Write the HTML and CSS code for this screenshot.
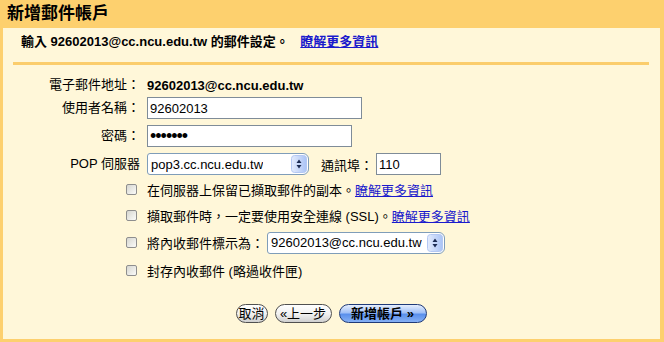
FILE: index.html
```html
<!DOCTYPE html>
<html lang="zh-Hant">
<head>
    <meta charset="UTF-8">
    <title>新增郵件帳戶</title>
    <link rel="stylesheet" href="styles.css">
</head>
<body>
    <div class="window">
        <div class="titlebar">新增郵件帳戶</div>

        <div class="panel">
            <p class="intro"><b>輸入 92602013@cc.ncu.edu.tw 的郵件設定。</b> <a href="#">瞭解更多資訊</a></p>
            <div class="rule"></div>

            <!-- Account fields + options -->
            <div class="form">
                <span class="label">電子郵件地址：</span>
                <span class="value">92602013@cc.ncu.edu.tw</span>

                <label class="label" for="username">使用者名稱：</label>
                <div class="cell"><input type="text" id="username" class="text user" value="92602013"></div>

                <label class="label" for="password">密碼：</label>
                <div class="cell"><input type="password" id="password" class="text pass" value="abcdefg"></div>

                <span class="label">POP 伺服器</span>
                <div class="cell">
                    <span class="select pop">
                        <span class="select-text">pop3.cc.ncu.edu.tw</span>
                        <svg class="spin" width="16" height="18" viewBox="0 0 16 18">
                            <defs>
                                <linearGradient id="spin-a" x1="0" y1="0" x2="1" y2="0">
                                    <stop offset="0" stop-color="#e4ecfd"/>
                                    <stop offset="1" stop-color="#aac3f5"/>
                                </linearGradient>
                            </defs>
                            <rect x="0.5" y="0.5" width="15" height="17" rx="3" fill="url(#spin-a)" stroke="#b4c8f3"/>
                            <path d="M8 4.5 L10.5 8 H5.5 Z M8 13.5 L10.5 10 H5.5 Z" fill="#1c2b52"/>
                        </svg>
                    </span>
                    <label class="port-label" for="port">通訊埠：</label>
                    <input type="text" id="port" class="text port" value="110">
                </div>

                <span class="check"></span>
                <div class="cell opt">在伺服器上保留已擷取郵件的副本。<a href="#">瞭解更多資訊</a></div>

                <span class="check"></span>
                <div class="cell opt">擷取郵件時，一定要使用安全連線 (SSL)。<a href="#">瞭解更多資訊</a></div>

                <span class="check"></span>
                <div class="cell opt">
                    將內收郵件標示為：
                    <span class="select label-as">
                        <span class="select-text">92602013@cc.ncu.edu.tw</span>
                        <svg class="spin" width="16" height="18" viewBox="0 0 16 18">
                            <defs>
                                <linearGradient id="spin-b" x1="0" y1="0" x2="1" y2="0">
                                    <stop offset="0" stop-color="#e4ecfd"/>
                                    <stop offset="1" stop-color="#aac3f5"/>
                                </linearGradient>
                            </defs>
                            <rect x="0.5" y="0.5" width="15" height="17" rx="3" fill="url(#spin-b)" stroke="#b4c8f3"/>
                            <path d="M8 4.5 L10.5 8 H5.5 Z M8 13.5 L10.5 10 H5.5 Z" fill="#1c2b52"/>
                        </svg>
                    </span>
                </div>

                <span class="check"></span>
                <div class="cell opt">封存內收郵件 (略過收件匣)</div>
            </div>

            <div class="actions">
                <button class="btn cancel">取消</button>
                <button class="btn back">«上一步</button>
                <button class="btn primary">新增帳戶 »</button>
            </div>
        </div>
    </div>
</body>
</html>
```

FILE: styles.css
```css
body {
    margin: 0;
    font-family: "Liberation Sans", "Noto Sans CJK TC", sans-serif;
    font-size: 13px;
    color: #000;
    background: #fff;
}
.window {
    width: 664px;
    height: 342px;
    display: flex;
    flex-direction: column;
}
.titlebar {
    height: 28px;
    line-height: 28px;
    padding-left: 7px;
    background-color: #fdd06e;
    font-size: 17px;
    font-weight: bold;
}
.panel {
    flex: 1;
    background-color: #fff7d9;
    border: 3px solid #fdd06e;
    border-top: none;
    border-right-width: 4px;
    padding: 0 11px 0 10px;
}
.intro {
    margin: 6px 0 0 8px;
    line-height: 16px;
}
a {
    color: #1a1acc;
    text-decoration: underline;
}
.intro a {
    font-weight: bold;
    margin-left: 8px;
}
.rule {
    height: 3px;
    margin-top: 12px;
    background-color: #fbcd6c;
}
.form {
    display: grid;
    grid-template-columns: 127px 1fr;
    grid-template-rows: 22px 24px 32px 24px 26px 26px 29px 26px;
    column-gap: 7px;
    align-items: center;
    margin-top: 9px;
}
.label {
    text-align: right;
    line-height: 16px;
}
.value {
    font-weight: bold;
}
.cell {
    display: flex;
    align-items: center;
}
.text {
    box-sizing: border-box;
    height: 22px;
    margin: 0;
    padding: 0 2px;
    border: 1px solid #7f8c98;
    background: #fff;
    font-family: "Liberation Sans", sans-serif;
    font-size: 13px;
}
.user {
    width: 215px;
}
.pass {
    width: 205px;
    font-size: 18px;
    letter-spacing: -1px;
}
.port {
    width: 65px;
}
.select {
    box-sizing: border-box;
    height: 22px;
    display: inline-flex;
    align-items: center;
    justify-content: space-between;
    padding: 0 1px 0 3px;
    border: 1px solid #7f9db9;
    border-radius: 3px 6px 6px 3px;
    background: #fff;
}
.select-text {
    white-space: nowrap;
    overflow: hidden;
}
.pop {
    width: 162px;
}
.label-as {
    width: 178px;
    margin-left: 3px;
}
.port-label {
    margin: 0 3px 0 12px;
}
.check {
    justify-self: end;
    margin-right: 3px;
    box-sizing: border-box;
    width: 11px;
    height: 11px;
    border: 1px solid #8e8e8e;
    border-radius: 2px;
    background: linear-gradient(135deg, #d6d6d0, #fbfbf9);
}
.opt {
    white-space: nowrap;
}
.actions {
    display: flex;
    justify-content: center;
    gap: 7px;
    margin-top: 21px;
}
.btn {
    box-sizing: border-box;
    height: 19px;
    padding: 0;
    border: 1px solid #505050;
    border-radius: 10px;
    background: linear-gradient(#ffffff, #f0f0f0 55%, #cfcfcf);
    font-family: "Liberation Sans", "Noto Sans CJK TC", sans-serif;
    font-size: 13px;
    line-height: 16px;
    color: #000;
}
.cancel {
    width: 32px;
}
.back {
    width: 57px;
}
.primary {
    width: 88px;
    font-weight: bold;
    border-color: #1f3a78;
    background: linear-gradient(#e6eefd, #a0c0f7 45%, #5a90ec 55%, #86b0f4);
}
```
